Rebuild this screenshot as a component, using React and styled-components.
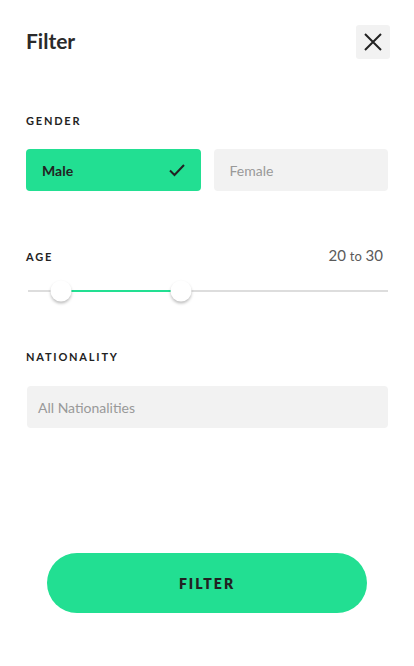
import styled, { createGlobalStyle } from "styled-components";

const GlobalStyle = createGlobalStyle`
  body {
    margin: 0;
    background: #fff;
    font-family: "Lato", "Liberation Sans", sans-serif;
    color: #222;
  }
`;

const GREEN = "#22df92";

const Page = styled.div`
  box-sizing: border-box;
  min-height: 666px;
  padding: 25px 26px 53px 26px;
  display: flex;
  flex-direction: column;
`;

const Header = styled.div`
  display: flex;
  justify-content: space-between;
  align-items: center;
  margin-right: -2px;
`;

const Title = styled.h1`
  margin: 0 0 3px 0;
  font-size: 21px;
  font-weight: 700;
  color: #2a2a2a;
`;

const CloseButton = styled.button`
  width: 34px;
  height: 34px;
  border: none;
  border-radius: 3px;
  background: #f2f2f2;
  display: flex;
  align-items: center;
  justify-content: center;
  padding: 0;
`;

const Label = styled.div`
  font-size: 11px;
  font-weight: 700;
  letter-spacing: 1.8px;
  color: #222;
  margin-top: ${(p) => p.$top}px;
`;

const Row = styled.div`
  display: flex;
  gap: 13px;
  margin-top: 22px;
`;

const Option = styled.div`
  flex: 1;
  height: 42px;
  border-radius: 4px;
  box-sizing: border-box;
  padding: 0 16px;
  display: flex;
  align-items: center;
  justify-content: space-between;
  font-size: 14px;
  background: ${(p) => (p.$active ? GREEN : "#f2f2f2")};
  color: ${(p) => (p.$active ? "#222" : "#999")};
  font-weight: ${(p) => (p.$active ? 700 : 400)};
`;

const AgeHeader = styled.div`
  display: flex;
  justify-content: space-between;
  align-items: baseline;
  margin-top: 55px;
  margin-right: 5px;
`;

const Range = styled.div`
  font-size: 15px;
  color: #5a5a5a;
  span {
    font-size: 13px;
  }
`;

const Track = styled.div`
  position: relative;
  height: 2px;
  background: #ddd;
  margin: 26px 0 0 2px;
`;

const Fill = styled.div`
  position: absolute;
  top: 0;
  height: 2px;
  background: ${GREEN};
`;

const Thumb = styled.div`
  position: absolute;
  top: 1px;
  width: 21px;
  height: 21px;
  border-radius: 50%;
  background: #fff;
  transform: translate(-50%, -50%);
  box-shadow: 0 2px 3px rgba(0, 0, 0, 0.25);
`;

const Select = styled.div`
  height: 42px;
  margin-top: 23px;
  margin-left: 1px;
  border-radius: 4px;
  background: #f2f2f2;
  display: flex;
  align-items: center;
  padding-left: 11px;
  font-size: 14px;
  color: #999;
`;

const FilterButton = styled.button`
  margin: auto 21px 0 21px;
  height: 60px;
  border: none;
  border-radius: 30px;
  background: ${GREEN};
  font-family: inherit;
  font-size: 14px;
  font-weight: 800;
  letter-spacing: 2px;
  color: #222;
`;

function App() {
  const lo = 9.1;
  const hi = 42.4;
  return (
    <Page>
      <GlobalStyle />
      <Header>
        <Title>Filter</Title>
        <CloseButton aria-label="Close">
          <svg width="18" height="18" viewBox="0 0 18 18">
            <path d="M1 1L17 17M17 1L1 17" stroke="#222" strokeWidth="2" />
          </svg>
        </CloseButton>
      </Header>

      <Label $top={55}>GENDER</Label>
      <Row>
        <Option $active>
          Male
          <svg width="16" height="13" viewBox="0 0 16 13">
            <path d="M1 6.5L5.5 11L15 1" fill="none" stroke="#222" strokeWidth="2" />
          </svg>
        </Option>
        <Option>Female</Option>
      </Row>

      <AgeHeader>
        <Label $top={0}>AGE</Label>
        <Range>
          20 <span>to</span> 30
        </Range>
      </AgeHeader>
      <Track>
        <Fill style={{ left: `${lo}%`, width: `${hi - lo}%` }} />
        <Thumb style={{ left: `${lo}%` }} />
        <Thumb style={{ left: `${hi}%` }} />
      </Track>

      <Label $top={58}>NATIONALITY</Label>
      <Select>All Nationalities</Select>

      <FilterButton>FILTER</FilterButton>
    </Page>
  );
}

export default App;
